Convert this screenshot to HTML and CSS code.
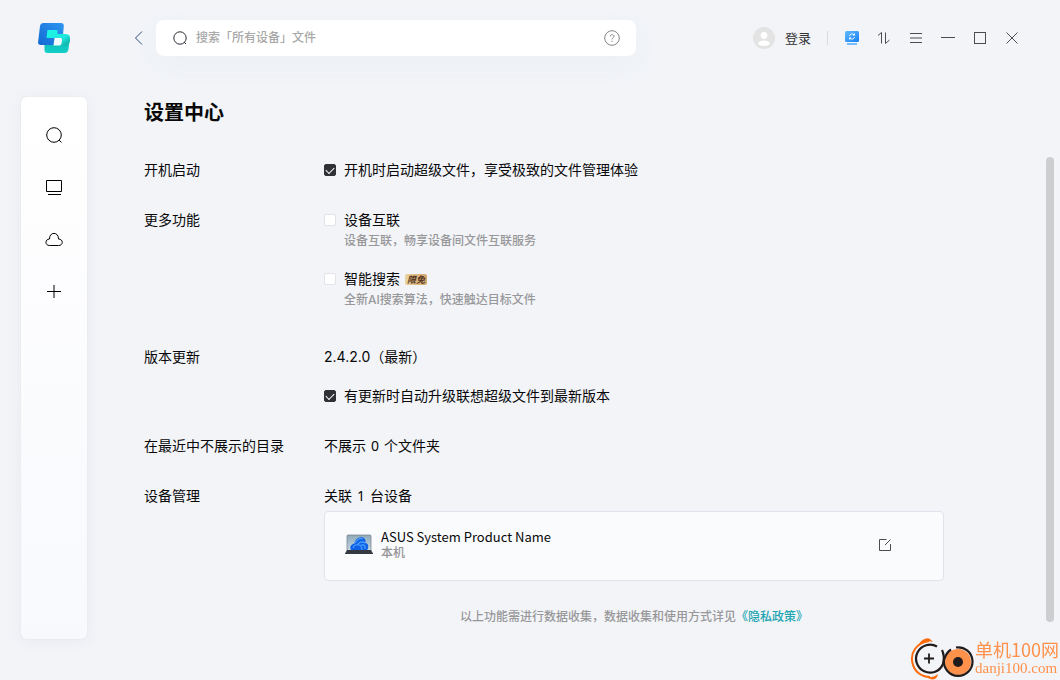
FILE: index.html
```html
<!DOCTYPE html>
<html lang="zh-CN">
<head>
<meta charset="utf-8">
<meta name="viewport" content="width=device-width, initial-scale=1">
<title>设置中心</title>
<link rel="stylesheet" href="styles.css">
</head>
<body>
<div class="app">
  <header class="topbar">
    <div class="brand">
      <svg width="34" height="34" viewBox="0 0 34 34" aria-hidden="true">
        <defs>
          <linearGradient id="blue" x1="1" y1="0" x2="0" y2="1"><stop offset="0" stop-color="#2e97f2"/><stop offset="1" stop-color="#1168d2"/></linearGradient>
          <linearGradient id="teal" x1="0" y1="0" x2="0" y2="1"><stop offset="0" stop-color="#12b8b4"/><stop offset="1" stop-color="#0fcfc8"/></linearGradient>
          <linearGradient id="mint" x1="0" y1="0" x2="1" y2="1"><stop offset="0" stop-color="#1cf7ea"/><stop offset=".6" stop-color="#1ee8dc"/><stop offset="1" stop-color="#0c9f9a"/></linearGradient>
        </defs>
        <path d="M7.500 23.500H29.500C32 23.500 33 17 33 16L31.500 28Q31 32 27.500 32H10.500Q7.500 32 7.500 29Z" fill="url(#teal)"/>
        <path d="M6.500 2H24Q27 2 26.800 5L26 14H18L16.500 24H4Q.8 24 1.100 21L3 5Q3.500 2 6.500 2Z" fill="url(#blue)"/>
        <path d="M10.500 9H20.500V13H28Q33 13 33 17V20Q31.500 26 24 24.500L25 20Q25.300 17 22.500 17H9.500Z" fill="url(#mint)"/>
        <path d="M18.500 17H23.500Q25 17 24.500 19L23.300 24.500H16.500Z" fill="#f4fbff"/>
      </svg>
    </div>
    <button class="icon-button back" aria-label="返回"><svg width="14" height="16" viewBox="0 0 14 16"><path d="M10 1.500 3.500 8l6.500 6.500" stroke="#2b4878"/></svg></button>
    <div class="search">
      <svg width="16" height="16" viewBox="0 0 16 16" aria-hidden="true"><circle cx="8" cy="8" r="6.200"/><path d="m12.200 12.200 1.800 1.800"/></svg>
      <input type="search" aria-label="搜索" placeholder="搜索「所有设备」文件">
      <button class="icon-button help" aria-label="帮助"><svg width="16" height="16" viewBox="0 0 16 16"><circle cx="8" cy="8" r="7.300"/><path d="M6.200 6.600C6.200 4 10 4 10 6.300c0 1.500-2 1.500-2 3.100M8 10.700v1.200"/></svg></button>
    </div>
    <div class="window-tools">
      <button class="login">
        <svg width="22" height="22" viewBox="0 0 22 22" aria-hidden="true"><circle cx="11" cy="11" r="11" fill="#e3e3e3" stroke="none"/><circle cx="11" cy="8.500" r="3.400" fill="#fff" stroke="none"/><ellipse cx="11" cy="16.200" rx="5.800" ry="2.800" fill="#fff" stroke="none"/></svg>
        <span>登录</span>
      </button>
      <span class="divider"></span>
      <button class="icon-button" aria-label="设备同步"><svg width="16" height="16" viewBox="0 0 16 16"><defs><linearGradient id="screen" x1="0" y1="0" x2="1" y2="1"><stop offset="0" stop-color="#62bdff"/><stop offset="1" stop-color="#157ff3"/></linearGradient></defs><rect x="1" y="1" width="14" height="11" rx="1.500" fill="url(#screen)" stroke="none"/><path d="M3 14h10" stroke="#4aaefc" stroke-width="1.500"/><path d="M5.500 6a2.700 2.700 0 0 1 4.800-1M10.500 7a2.700 2.700 0 0 1-4.800 1M10.500 3.500V5.200H9M5.500 9.500V7.800H7" stroke="#fff" stroke-width=".9"/></svg></button>
      <button class="icon-button" aria-label="传输列表"><svg width="16" height="16" viewBox="0 0 16 16"><path d="M5.500 13.500V2.500L2 5.500M9.500 2.500v11l4-3.500"/></svg></button>
      <button class="icon-button" aria-label="菜单"><svg width="16" height="16" viewBox="0 0 16 16"><path d="M2 3.500h12M2 8h12M2 12.500h12"/></svg></button>
      <button class="icon-button" aria-label="最小化"><svg width="16" height="16" viewBox="0 0 16 16"><path d="M1 7.500h14"/></svg></button>
      <button class="icon-button" aria-label="最大化"><svg width="16" height="16" viewBox="0 0 16 16"><rect x="2.500" y="2.500" width="11" height="11"/></svg></button>
      <button class="icon-button" aria-label="关闭"><svg width="16" height="16" viewBox="0 0 16 16"><path d="m2.500 2.500 11 11M13.500 2.500l-11 11"/></svg></button>
    </div>
  </header>

  <div class="workspace">
    <nav class="sidebar" aria-label="主导航">
      <button class="icon-button" aria-label="搜索"><svg width="20" height="20" viewBox="0 0 20 20"><circle cx="10" cy="10" r="7.300"/><path d="m15 15 2.500 2.500"/></svg></button>
      <button class="icon-button" aria-label="设备"><svg width="20" height="20" viewBox="0 0 20 20"><path d="M2.500 3.500h15v11h-15zM4 17.500h13"/></svg></button>
      <button class="icon-button" aria-label="云盘"><svg width="20" height="20" viewBox="0 0 20 20"><path d="M5.500 16.500C.7 16.500 .8 10.200 5.500 10C5.200 2.500 14.800 2.500 14.500 10C19.500 10.200 19.500 16.500 14.500 16.500Z"/></svg></button>
      <button class="icon-button" aria-label="添加"><svg width="20" height="20" viewBox="0 0 20 20"><path d="M10 4v13M3 10.500h14"/></svg></button>
    </nav>

    <main class="settings">
      <h1>设置中心</h1>
      <div class="scroll-area">
        <div class="rows">
          <section class="row">
            <h2>开机启动</h2>
            <label class="option"><input type="checkbox" checked><span>开机时启动超级文件，享受极致的文件管理体验</span></label>
          </section>
          <section class="row features">
            <h2>更多功能</h2>
            <div class="stack">
              <div>
                <label class="option"><input type="checkbox" aria-describedby="link-note"><span>设备互联</span></label>
                <p class="note" id="link-note">设备互联，畅享设备间文件互联服务</p>
              </div>
              <div>
                <label class="option"><input type="checkbox" aria-describedby="smart-note"><span>智能搜索</span><em class="tag">限免</em></label>
                <p class="note" id="smart-note">全新AI搜索算法，快速触达目标文件</p>
              </div>
            </div>
          </section>
          <section class="row">
            <h2>版本更新</h2>
            <div class="stack">
              <p>2.4.2.0（最新）</p>
              <label class="option"><input type="checkbox" checked><span>有更新时自动升级联想超级文件到最新版本</span></label>
            </div>
          </section>
          <section class="row">
            <h2>在最近中不展示的目录</h2>
            <p>不展示 <span class="count">0</span> 个文件夹</p>
          </section>
          <section class="row">
            <h2>设备管理</h2>
            <div>
              <p>关联 <span class="count">1</span> 台设备</p>
              <div class="device">
                <svg width="28" height="22" viewBox="0 0 28 22" aria-hidden="true">
                  <defs><linearGradient id="wall" x1="0" y1="0" x2="0" y2="1"><stop offset="0" stop-color="#8da9b8"/><stop offset="1" stop-color="#c5d9e6"/></linearGradient></defs>
                  <rect x="2" y="1" width="24" height="16" rx="1" fill="url(#wall)" stroke="#707c85" stroke-width=".7"/>
                  <path d="M6 16C4 12 7 10 9.500 9.500C9.500 6 14 2 18 3.500C21 5 21 8 20 9C24 9 24 14 22 16Z" fill="#0f62e8" stroke="none"/>
                  <path d="M8 14Q9 10 14 11Q17 12 17 16M10 9Q14 3 18 5M12 11Q16 6 20 9M16 11Q21 10 20 15" stroke="#4ba3ff" stroke-width="1.100"/>
                  <path d="M2 16h24l2 3.500H0Z" fill="#343941" stroke="none"/><path d="M0 19.500h28" stroke="#343941"/>
                </svg>
                <div class="device-text"><strong>ASUS System Product Name</strong><span>本机</span></div>
                <button class="icon-button" aria-label="编辑"><svg width="16" height="16" viewBox="0 0 16 16"><path d="M9.500 2.500h-7v11h11V7M8 8l5.500-5.500"/></svg></button>
              </div>
            </div>
          </section>
        </div>
        <p class="policy">以上功能需进行数据收集，数据收集和使用方式详见<a href="#privacy">《隐私政策》</a></p>
      </div>
    </main>
    <div class="scroll-thumb" aria-hidden="true"></div>
  </div>

  <aside class="watermark">
    <svg width="64" height="44" viewBox="0 0 64 44" aria-hidden="true">
      <path d="M19 5C6 7 0 17 2.500 27C4 35 11 41 20 41" stroke="#ff6b0a" stroke-width="2"/>
      <path d="M9 8C12 3 17 1 20 3L23 6Q16 4 9 8ZM16 41Q23 42 28 38Q27 45 20 43Z" fill="#ff6b0a" stroke="none"/>
      <path d="M27 10.500A14 14 0 1 0 33 28Q35 20 32 14" stroke="#211b1c" stroke-width="2.200"/>
      <path d="M19 17.500v10M14 22.500h10" stroke="#211b1c" stroke-width="1.800"/>
      <circle cx="48" cy="26" r="13" fill="#ff914a" stroke="none"/>
      <path d="M46 11.500A14.300 14.300 0 1 1 34 24Q36 17 41 13.500" stroke="#211b1c" stroke-width="2.200"/>
      <circle cx="48" cy="26" r="5" fill="#211b1c" stroke="none"/>
    </svg>
    <div class="watermark-text"><span class="site">单机100网</span><span class="domain">danji100.com</span></div>
  </aside>
</div>
</body>
</html>
```

FILE: styles.css
```css
* {
  box-sizing: border-box;
}

body {
  margin: 0;
  background: #f2f4f8;
  color: #080808;
  font: 14px/20px Inter, "Noto Sans CJK SC", sans-serif;
}

h1,
h2,
p {
  margin: 0;
  font-size: 14px;
  font-weight: 400;
}

button {
  border: 0;
  padding: 0;
  background: none;
  color: inherit;
  font: inherit;
}

svg {
  display: block;
  flex: none;
  fill: none;
  stroke: #4b4c50;
  stroke-width: 1;
}

.icon-button {
  display: grid;
  place-items: center;
  flex: none;
}

.app {
  display: flex;
  flex-direction: column;
  min-height: 100vh;
}

.topbar {
  display: flex;
  align-items: center;
  padding: 20px 40px 20px 37px;
}

.brand {
  flex: none;
  width: 94px;
}

.brand svg {
  stroke: none;
}

.back {
  width: 16px;
  margin-right: 9px;
}

.search {
  display: flex;
  flex: 0 1 480px;
  align-items: center;
  gap: 8px;
  height: 36px;
  padding: 0 16px;
  border-radius: 8px;
  background: #fff;
  box-shadow: 0 8px 24px #e4ecf166;
}

.search svg {
  stroke: #272a32;
}

.search .help svg {
  stroke: #858585;
}

.search input {
  flex: 1;
  min-width: 0;
  border: 0;
  padding: 0;
  outline: 0;
  background: transparent;
  font: 500 12px/20px Inter, "Noto Sans CJK SC", sans-serif;
}

.search input::placeholder {
  color: #a8a8a8;
  opacity: 1;
}

.window-tools {
  display: flex;
  align-items: center;
  gap: 16px;
  margin-left: auto;
}

.login {
  display: flex;
  align-items: center;
  gap: 10px;
  color: #303133;
  font-size: 13px;
}

.divider {
  width: 1px;
  height: 14px;
  background: #d8dadd;
}

.workspace {
  display: flex;
  flex: 1;
  padding: 21px 6px 41px 21px;
}

.sidebar {
  display: flex;
  flex: none;
  flex-direction: column;
  align-items: center;
  gap: 32px;
  width: 66px;
  padding: 28px 0;
  border-radius: 6px;
  background: linear-gradient(#fff, #f8f9fd);
  box-shadow: 0 2px 12px #dfe2e780, 0 0 1px #cfd4da;
}

.sidebar svg {
  stroke: #000;
}

.settings {
  flex: 1;
  min-width: 0;
  padding: 0 102px 0 57px;
}

.settings h1 {
  font-size: 20px;
  font-weight: 700;
  line-height: 32px;
}

.scroll-area {
  padding-top: 31px;
}

.rows {
  display: flex;
  flex-direction: column;
  gap: 30px;
}

.row {
  display: grid;
  grid-template-columns: 180px minmax(0, 1fr);
}

.features {
  padding-bottom: 6px;
}

.stack {
  display: flex;
  flex-direction: column;
  gap: 19px;
}

.features .stack {
  gap: 17px;
}

.option {
  display: flex;
  align-items: center;
}

.option input {
  appearance: none;
  flex: none;
  width: 12px;
  height: 12px;
  margin: 0 8px 0 0;
  border: 1px solid #e1e3e9;
  border-radius: 2px;
  background: #fff;
}

.option input:checked {
  border-color: #303136;
  background: #303136;
}

.option input:checked::before {
  content: "";
  display: block;
  width: 7px;
  height: 4px;
  margin: 2px auto 0;
  border: solid #fff;
  border-width: 0 0 1px 1px;
  transform: rotate(-45deg);
}

.note {
  padding-left: 20px;
  color: #98989a;
  font-size: 12px;
  font-weight: 500;
  line-height: 22px;
}

.count {
  margin: 0 1px;
  font-family: "Noto Sans", sans-serif;
}

.tag {
  margin-left: 5px;
  padding: 0 2px;
  border-radius: 2px;
  background: linear-gradient(90deg, #ead2a0, #d4a66e);
  color: #54351e;
  font-size: 9px;
  font-weight: 700;
  line-height: 11px;
}

.device {
  display: flex;
  align-items: center;
  gap: 8px;
  min-height: 70px;
  margin-top: 5px;
  padding: 0 50px 3px 20px;
  border: 1px solid #dfe3eb;
  border-radius: 4px;
  background: #fafbfd;
}

.device-text {
  display: flex;
  flex: 1;
  flex-direction: column;
  font-size: 12px;
  line-height: 16px;
}

.device-text strong {
  font-family: "Noto Sans CJK SC", sans-serif;
  font-size: 13px;
  font-weight: 400;
}

.device-text span {
  color: #949496;
  font-weight: 500;
}

.policy {
  padding: 26px 0 0 180px;
  color: #98989a;
  font-size: 12px;
  font-weight: 500;
  text-align: center;
}

.policy a {
  color: #20a5b1;
  text-decoration: none;
}

.scroll-thumb {
  flex: none;
  width: 8px;
  margin: 60px 0 17px;
  border-radius: 4px;
  background: #cdced0;
}

.watermark {
  position: fixed;
  right: 1px;
  bottom: 0;
  display: flex;
  align-items: center;
  gap: 1px;
  color: #ff914a;
}

.watermark-text {
  display: flex;
  flex-direction: column;
}

.site {
  font: 400 18px/20px "Noto Sans CJK SC", sans-serif;
}

.domain {
  font: 15px/18px "Liberation Serif", serif;
}
```
